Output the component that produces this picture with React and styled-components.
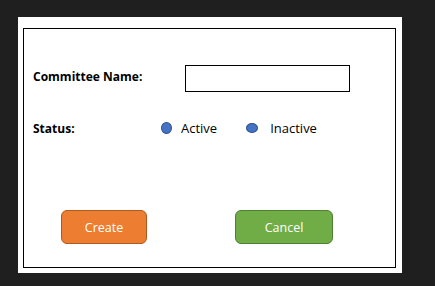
import React from "react";
import styled, { createGlobalStyle } from "styled-components";

const Global = createGlobalStyle`
  html, body { margin: 0; padding: 0; background: #1f1f1f; }
  body { font-family: "Open Sans", "Liberation Sans", sans-serif; }
`;

const Page = styled.div`
  width: 435px;
  height: 286px;
  padding: 17px 0 0 18px;
  box-sizing: border-box;
`;

const Panel = styled.div`
  width: 384px;
  height: 256px;
  background: #ffffff;
  padding: 11px 6px 5px 5px;
  box-sizing: border-box;
  display: flex;
`;

const Frame = styled.div`
  flex: 1;
  border: 1px solid #000;
  display: flex;
  flex-direction: column;
  padding: 36px 0 0 9px;
  box-sizing: border-box;
`;

const Row = styled.div`
  display: flex;
  align-items: center;
  height: ${(p) => p.$h}px;
  margin-top: ${(p) => p.$mt || 0}px;
`;

const Label = styled.div`
  width: ${(p) => p.$w}px;
  padding-bottom: ${(p) => p.$raise || 0}px;
  font-weight: 700;
  font-size: 12px;
  color: #000;
`;

const Input = styled.div`
  width: 165px;
  height: 27px;
  border: 1px solid #000;
  box-sizing: border-box;
`;

const Option = styled.div`
  display: flex;
  align-items: center;
  gap: ${(p) => p.$gap}px;
  margin-right: ${(p) => p.$mr || 0}px;
  font-size: 13px;
  color: #000;
`;

const Dot = styled.span`
  display: inline-block;
  width: ${(p) => p.$w}px;
  height: ${(p) => p.$h}px;
  border-radius: 50%;
  background: #4472c4;
  border: 1px solid #2f528f;
  box-sizing: border-box;
`;

const Buttons = styled.div`
  display: flex;
  margin-top: 75px;
  padding-left: 28px;
  gap: 88px;
`;

const Button = styled.div`
  width: ${(p) => p.$w}px;
  height: 34px;
  border-radius: 6px;
  box-sizing: border-box;
  display: flex;
  align-items: center;
  justify-content: center;
  color: #fff;
  font-size: 12.5px;
  background: ${(p) => p.$bg};
  border: 1px solid ${(p) => p.$bd};
`;

export default function App() {
  return (
    <>
      <Global />
      <Page>
        <Panel>
          <Frame>
            <Row $h={27}>
              <Label $w={152} $raise={4}>Committee Name:</Label>
              <Input />
            </Row>
            <Row $h={14} $mt={29}>
              <Label $w={128}>Status:</Label>
              <Option $gap={9} $mr={29}>
                <Dot $w={11} $h={12} />
                Active
              </Option>
              <Option $gap={12}>
                <Dot $w={12} $h={10} />
                Inactive
              </Option>
            </Row>
            <Buttons>
              <Button $w={86} $bg="#ed7d31" $bd="#ae5a21">Create</Button>
              <Button $w={98} $bg="#70ad47" $bd="#507e32">Cancel</Button>
            </Buttons>
          </Frame>
        </Panel>
      </Page>
    </>
  );
}
